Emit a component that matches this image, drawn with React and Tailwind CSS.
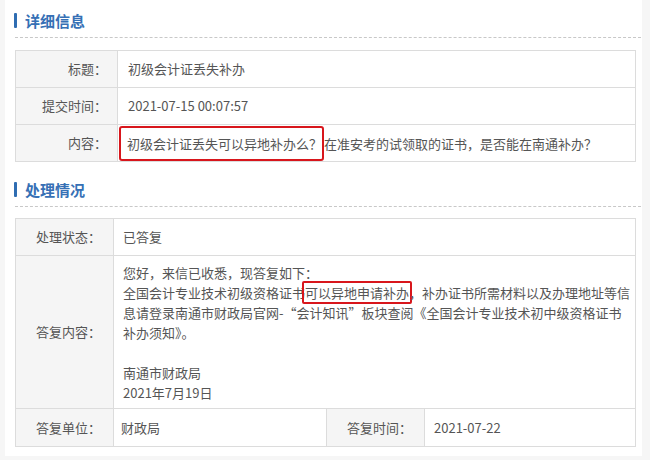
import React from "react";

const font = { fontFamily: '"Noto Sans CJK SC", "Noto Sans", sans-serif' };

const SectionTitle = ({ children, className = "" }) => (
  <div className={`pt-[10px] pb-[6px] border-b border-dashed border-[#c8c8c8] ${className}`}>
    <div className="flex items-center h-[21px]">
      <span className="block w-[3px] h-[15px] -ml-[1px] bg-[#2f6db2] rounded-[1px]" />
      <span className="ml-[8px] text-[15px] font-bold text-[#3670b5] leading-none">{children}</span>
    </div>
  </div>
);

const Label = ({ children, pr = "pr-[10px]" }) => (
  <td className={`${pr} bg-[#f5f5f5] border border-[#dcdcdc] text-right align-middle whitespace-nowrap`}>
    {children}
  </td>
);

const Line = ({ children }) => <div className="h-[20px] leading-[20px] whitespace-nowrap">{children}</div>;

export default function App() {
  return (
    <div className="w-[650px] h-[460px] bg-[#f6f6f6] overflow-hidden text-[13px] text-[#555]" style={font}>
      <div className="ml-[5px] w-[637px] h-[456px] bg-white pl-[10px] pr-[1px]">
        {/* 详细信息 */}
        <SectionTitle>详细信息</SectionTitle>
        <table className="mt-[12px] w-[621px] border-collapse table-fixed">
          <colgroup>
            <col className="w-[102px]" />
            <col />
          </colgroup>
          <tbody>
            <tr className="h-[37px]">
              <Label>标题：</Label>
              <td className="border border-[#dcdcdc] pl-[10px]">初级会计证丢失补办</td>
            </tr>
            <tr className="h-[37px]">
              <Label>提交时间：</Label>
              <td className="border border-[#dcdcdc] pl-[10px]">2021-07-15 00:07:57</td>
            </tr>
            <tr className="h-[37px]">
              <Label>内容：</Label>
              <td className="border border-[#dcdcdc] pl-[1px] whitespace-nowrap">
                <span className="inline-block align-middle border-2 border-[#d8161c] rounded-[3px] pl-[6px] pr-[0px] leading-[31px]">
                  初级会计证丢失可以异地补办么？
                </span>
                <span className="align-middle">在准安考的试领取的证书，是否能在南通补办？</span>
              </td>
            </tr>
          </tbody>
        </table>

        {/* 处理情况 */}
        <SectionTitle className="mt-[7px]">处理情况</SectionTitle>
        <table className="mt-[11px] w-[621px] border-collapse table-fixed">
          <colgroup>
            <col className="w-[98px]" />
            <col className="w-[213px]" />
            <col className="w-[98px]" />
            <col />
          </colgroup>
          <tbody>
            <tr className="h-[37px]">
              <Label pr="pr-[12px]">处理状态：</Label>
              <td colSpan={3} className="border border-[#dcdcdc] pl-[9px]">已答复</td>
            </tr>
            <tr>
              <Label pr="pr-[12px]">答复内容：</Label>
              <td colSpan={3} className="border border-[#dcdcdc] pl-[9px] pt-[7px] pb-[5px]">
                <Line>您好，来信已收悉，现答复如下：</Line>
                <Line>
                  全国会计专业技术初级资格证书
                  <span className="border-2 border-[#d8161c] rounded-[2px] px-[1px] -mx-[3px]">可以异地申请补办</span>
                  ，补办证书所需材料以及办理地址等信
                </Line>
                <Line>息请登录南通市财政局官网-“会计知讯”板块查阅《全国会计专业技术初中级资格证书</Line>
                <Line>补办须知》。</Line>
                <Line />
                <Line>南通市财政局</Line>
                <Line>2021年7月19日</Line>
              </td>
            </tr>
            <tr className="h-[38px]">
              <Label pr="pr-[12px]">答复单位：</Label>
              <td className="border border-[#dcdcdc] pl-[7px]">财政局</td>
              <Label pr="pr-[12px]">答复时间：</Label>
              <td className="border border-[#dcdcdc] pl-[9px]">2021-07-22</td>
            </tr>
          </tbody>
        </table>
      </div>
    </div>
  );
}
